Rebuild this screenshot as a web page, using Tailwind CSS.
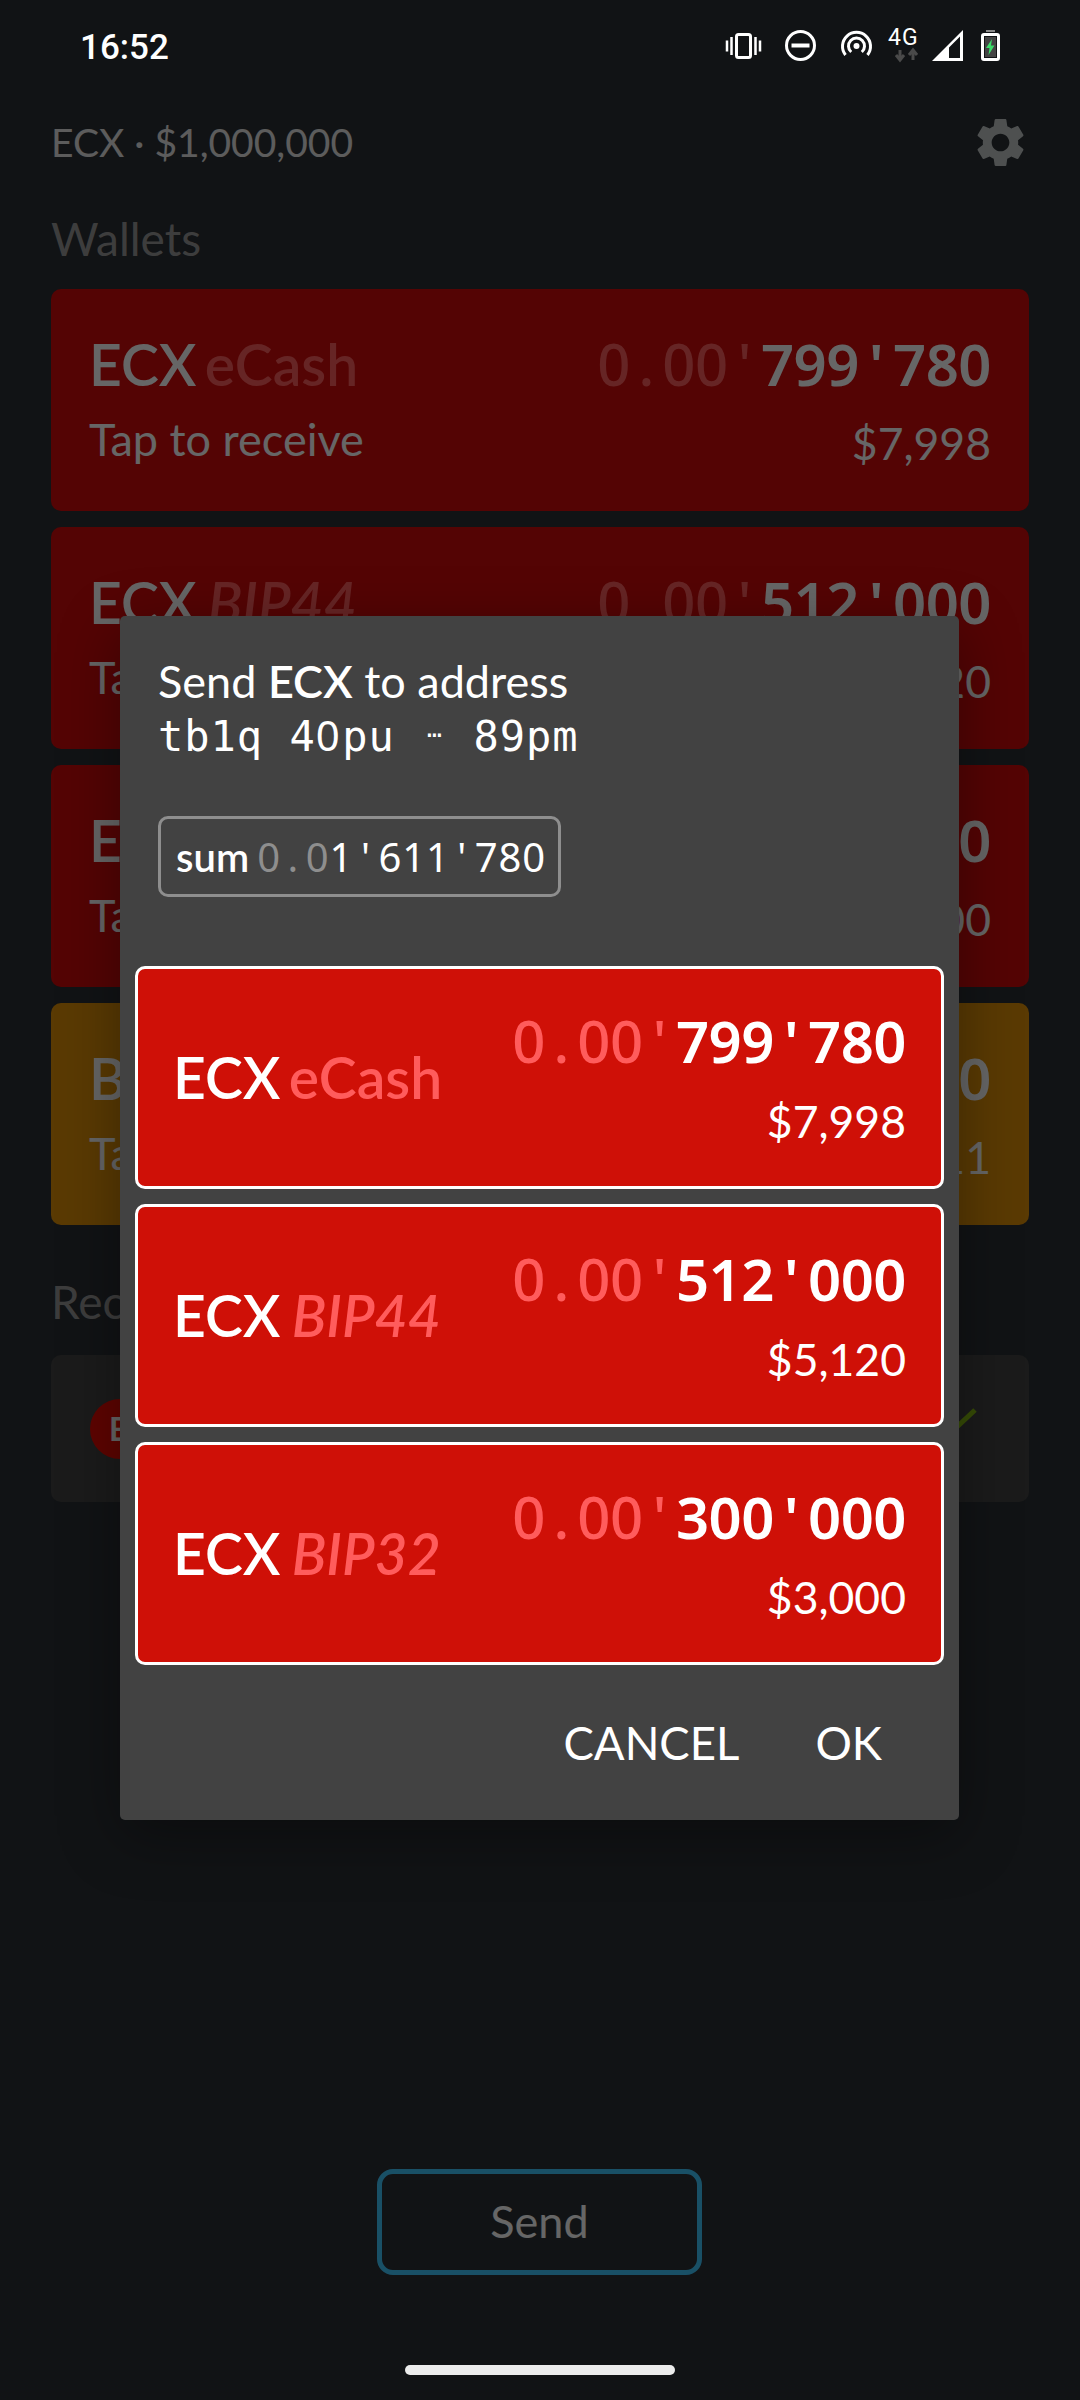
<!DOCTYPE html>
<html lang="en">
<head>
    <meta charset="UTF-8">
    <title>Wallets</title>
    <script src="https://cdn.jsdelivr.net/npm/@tailwindcss/browser@4"></script>
</head>
<body class="bg-[#2b3035]">
<div class="relative w-[1080px] h-[2400px] overflow-hidden font-['Lato',sans-serif] text-white">

    <!-- 상태바 -->
    <div class="relative z-20 flex h-[96px] items-center justify-between pl-[80px] pr-[80px]">
        <span class="font-['Roboto',sans-serif] font-medium text-[35px] leading-[92px]">16:52</span>
        <svg width="275" height="40" viewBox="725 28 275 40" fill="none" class="mt-[-4px]">
            <g stroke="#fff" stroke-width="3">
                <rect x="736.500" y="36.500" width="14" height="23" rx="2"/>
                <path d="M731.500 39v18M755.500 39v18M727 42.500v11M760 42.500v11" stroke-width="2.500"/>
                <circle cx="800.500" cy="47.500" r="14"/>
                <path d="M791.500 47.500h18" stroke-width="4"/>
                <path d="M845.500 57a14 14 0 1 1 22 0M851.200 54a8 8 0 1 1 10.600 0"/>
            </g>
            <circle cx="856.500" cy="48" r="3" fill="#fff"/>
            <text x="888" y="47" font-family="Roboto" font-size="23" letter-spacing="1" fill="#fff">4G</text>
            <path d="M900 52v9M896 57l4 5 4-5M913 62v-9M909 57l4-5 4 5" stroke="#4a4a4a" stroke-width="3"/>
            <path d="M963 32v31h-31zM949 49.500v10.500h11v-21.500z" fill="#fff" fill-rule="evenodd"/>
            <rect x="982.500" y="36.500" width="16" height="25" rx="1.500" stroke="#fff" stroke-width="3"/>
            <rect x="986" y="32" width="9" height="2" fill="#8a8a8a"/>
            <rect x="985" y="39" width="11" height="20" fill="#444"/>
            <path d="M992 41l-6 9h3.500l-1 7 6-9.500h-3.500z" fill="#3ddc6a"/>
        </svg>
    </div>

    <!-- 메인 화면 -->
    <div class="px-[51px]">
        <div class="flex h-[92px] items-center justify-between">
            <span class="text-[39px] text-[#e6e6e6]">ECX · $1,000,000</span>
            <svg width="59" height="59" viewBox="0 0 24 24" fill="#c2c8c8" class="mr-[-1px]">
                <path d="M19.14 12.94c.04-.3.06-.61.06-.94 0-.32-.02-.64-.07-.94l2.03-1.58c.18-.14.23-.41.12-.61l-1.92-3.32c-.12-.22-.37-.29-.59-.22l-2.39.96c-.5-.38-1.03-.7-1.62-.94l-.36-2.54c-.04-.24-.24-.41-.48-.41h-3.84c-.24 0-.43.17-.47.41l-.36 2.54c-.59.24-1.13.57-1.62.94l-2.39-.96c-.22-.08-.47 0-.59.22L2.74 8.87c-.12.21-.08.47.12.61l2.03 1.58c-.05.3-.09.63-.09.94s.02.64.07.94l-2.03 1.58c-.18.14-.23.41-.12.61l1.92 3.32c.12.22.37.29.59.22l2.39-.96c.5.38 1.03.7 1.62.94l.36 2.54c.05.24.24.41.48.41h3.84c.24 0 .44-.17.47-.41l.36-2.54c.59-.24 1.13-.56 1.62-.94l2.39.96c.22.08.47 0 .59-.22l1.92-3.32c.12-.22.07-.47-.12-.61l-2.01-1.58zM12 15.6c-1.98 0-3.6-1.62-3.6-3.6s1.62-3.6 3.6-3.6 3.6 1.62 3.6 3.6-1.62 3.6-3.6 3.6z"/>
            </svg>
        </div>
        <div class="h-[101px] pt-[21px] text-[46px] leading-[60px] text-[#9a9a9a]">Wallets</div>

        <div class="flex flex-col gap-[16px]">
            <div class="flex h-[222px] items-start justify-between rounded-[10px] bg-[#d20a0a] px-[38px] pt-[40px]">
                <div>
                    <div class="text-[57px] leading-[70px] font-semibold">ECX <span class="ml-[-6px] text-[#ff5c5c]">eCash</span></div>
                    <div class="mt-[12px] text-[45px] leading-[56px]">Tap to receive</div>
                </div>
                <div class="text-right">
                    <div class="font-['Noto_Sans',sans-serif] text-[58px] leading-[70px] tracking-[-0.5px] font-[570]"><span class="font-medium text-[#ff5c5c]">0<span class="mx-[8.600px]">.</span>00<span class="mx-[10px]">'</span></span>799<span class="mx-[10px]">'</span>780</div>
                    <div class="mt-[16px] text-[44.500px] leading-[56px]">$7,998</div>
                </div>
            </div>
            <div class="flex h-[222px] items-start justify-between rounded-[10px] bg-[#d20a0a] px-[38px] pt-[40px]">
                <div>
                    <div class="text-[57px] leading-[70px] font-semibold">ECX <span class="ml-[-3px] italic text-[#ff5c5c]">BIP44</span></div>
                    <div class="mt-[12px] text-[45px] leading-[56px]">Tap to receive</div>
                </div>
                <div class="text-right">
                    <div class="font-['Noto_Sans',sans-serif] text-[58px] leading-[70px] tracking-[-0.5px] font-[570]"><span class="font-medium text-[#ff5c5c]">0<span class="mx-[8.600px]">.</span>00<span class="mx-[10px]">'</span></span>512<span class="mx-[10px]">'</span>000</div>
                    <div class="mt-[16px] text-[44.500px] leading-[56px]">$5,120</div>
                </div>
            </div>
            <div class="flex h-[222px] items-start justify-between rounded-[10px] bg-[#d20a0a] px-[38px] pt-[40px]">
                <div>
                    <div class="text-[57px] leading-[70px] font-semibold">ECX <span class="ml-[-3px] italic text-[#ff5c5c]">BIP32</span></div>
                    <div class="mt-[12px] text-[45px] leading-[56px]">Tap to receive</div>
                </div>
                <div class="text-right">
                    <div class="font-['Noto_Sans',sans-serif] text-[58px] leading-[70px] tracking-[-0.5px] font-[570]"><span class="font-medium text-[#ff5c5c]">0<span class="mx-[8.600px]">.</span>00<span class="mx-[10px]">'</span></span>300<span class="mx-[10px]">'</span>000</div>
                    <div class="mt-[16px] text-[44.500px] leading-[56px]">$3,000</div>
                </div>
            </div>
            <div class="flex h-[222px] items-start justify-between rounded-[10px] bg-[#e19109] px-[38px] pt-[40px]">
                <div>
                    <div class="text-[57px] leading-[70px] font-semibold">BTC</div>
                    <div class="mt-[12px] text-[45px] leading-[56px]">Tap to receive</div>
                </div>
                <div class="text-right">
                    <div class="font-['Noto_Sans',sans-serif] text-[58px] leading-[70px] tracking-[-0.5px] font-[570]"><span class="font-medium">0<span class="mx-[8.600px]">.</span>00<span class="mx-[10px]">'</span></span>000<span class="mx-[10px]">'</span>010</div>
                    <div class="mt-[16px] text-[44.500px] leading-[56px]">$0.11</div>
                </div>
            </div>
        </div>

        <div class="h-[130px] pt-[47px] text-[46px] leading-[60px] text-[#9a9a9a]">Recent</div>
        <div class="flex h-[147px] items-center justify-between rounded-[10px] bg-[#444] pl-[39px] pr-[46px]">
            <div class="flex h-[60px] w-[60px] items-center rounded-full bg-[#eb0c00] pl-[19px] text-[32px] font-bold">ECX</div>
            <svg width="40" height="40" viewBox="0 0 40 40" fill="none" class="mt-[-14px]"><path d="M0 38 L32 8" stroke="#8bc010" stroke-width="5"/></svg>
        </div>
    </div>

    <!-- 보내기 버튼 -->
    <div class="absolute left-[377px] top-[2169px] flex h-[106px] w-[325px] items-center justify-center rounded-[16px] border-[5px] border-[#40c8ff] text-[45px]">Send</div>

    <!-- 오버레이 -->
    <div class="absolute inset-0 z-10 bg-black/60"></div>

    <!-- 다이얼로그 -->
    <div class="absolute left-[120px] top-[616px] z-10 h-[1204px] w-[839px] rounded-[5px] bg-[#424242] shadow-[0_16px_60px_rgba(0,0,0,0.35)]">
        <div class="pl-[38px] pt-[40px]">
            <div class="text-[45px] leading-[50px]">Send <span class="font-semibold">ECX</span> to address</div>
            <div class="mt-[6px] h-[50px] font-['DejaVu_Sans_Mono',monospace] text-[42px] leading-[50px] tracking-[1px]">tb1q 4<span class="font-['Noto_Sans',sans-serif] leading-none tracking-[2.500px]">0</span>pu <span class="inline-block w-[26px] text-center align-[8px] text-[24px] leading-none tracking-normal">⋯</span> 89pm</div>
            <div class="mt-[54px] flex h-[81px] w-[403px] items-center rounded-[10px] border-[3px] border-[#8e8e8e] pl-[15px]">
                <span class="text-[40px] font-semibold">sum</span>
                <span class="ml-[8px] font-['Noto_Sans',sans-serif] text-[40px] tracking-[0.900px]"><span class="text-[#8e8e8e]">0<span class="mx-[6.600px]">.</span>0</span>1<span class="mx-[7.600px]">'</span>611<span class="mx-[7.600px]">'</span>780</span>
            </div>
        </div>

        <div class="mt-[69px] flex flex-col gap-[15px] px-[15px]">
            <div class="flex h-[223px] items-center justify-between rounded-[10px] border-[3px] border-white bg-[#cf1007] pl-[35px] pr-[35px]">
                <div class="text-[57px] font-semibold">ECX <span class="ml-[-6px] text-[#ff5c5c]">eCash</span></div>
                <div class="text-right">
                    <div class="font-['Noto_Sans',sans-serif] text-[58px] leading-[70px] tracking-[-0.5px] font-[570]"><span class="font-medium text-[#ff5c5c]">0<span class="mx-[8.600px]">.</span>00<span class="mx-[10px]">'</span></span>799<span class="mx-[10px]">'</span>780</div>
                    <div class="mt-[17px] text-[44.500px] leading-[56px]">$7,998</div>
                </div>
            </div>
            <div class="flex h-[223px] items-center justify-between rounded-[10px] border-[3px] border-white bg-[#cf1007] pl-[35px] pr-[35px]">
                <div class="text-[57px] font-semibold">ECX <span class="ml-[-3px] italic text-[#ff5c5c]">BIP44</span></div>
                <div class="text-right">
                    <div class="font-['Noto_Sans',sans-serif] text-[58px] leading-[70px] tracking-[-0.5px] font-[570]"><span class="font-medium text-[#ff5c5c]">0<span class="mx-[8.600px]">.</span>00<span class="mx-[10px]">'</span></span>512<span class="mx-[10px]">'</span>000</div>
                    <div class="mt-[17px] text-[44.500px] leading-[56px]">$5,120</div>
                </div>
            </div>
            <div class="flex h-[223px] items-center justify-between rounded-[10px] border-[3px] border-white bg-[#cf1007] pl-[35px] pr-[35px]">
                <div class="text-[57px] font-semibold">ECX <span class="ml-[-3px] italic text-[#ff5c5c]">BIP32</span></div>
                <div class="text-right">
                    <div class="font-['Noto_Sans',sans-serif] text-[58px] leading-[70px] tracking-[-0.5px] font-[570]"><span class="font-medium text-[#ff5c5c]">0<span class="mx-[8.600px]">.</span>00<span class="mx-[10px]">'</span></span>300<span class="mx-[10px]">'</span>000</div>
                    <div class="mt-[17px] text-[44.500px] leading-[56px]">$3,000</div>
                </div>
            </div>
        </div>

        <div class="mt-[48px] flex justify-end gap-[76px] pr-[77px] text-[45.500px] leading-[60px]">
            <span>CANCEL</span>
            <span>OK</span>
        </div>
    </div>

    <!-- 홈 인디케이터 -->
    <div class="absolute left-[405px] top-[2365px] z-20 h-[10px] w-[270px] rounded-full bg-[#ececec]"></div>
</div>
</body>
</html>
